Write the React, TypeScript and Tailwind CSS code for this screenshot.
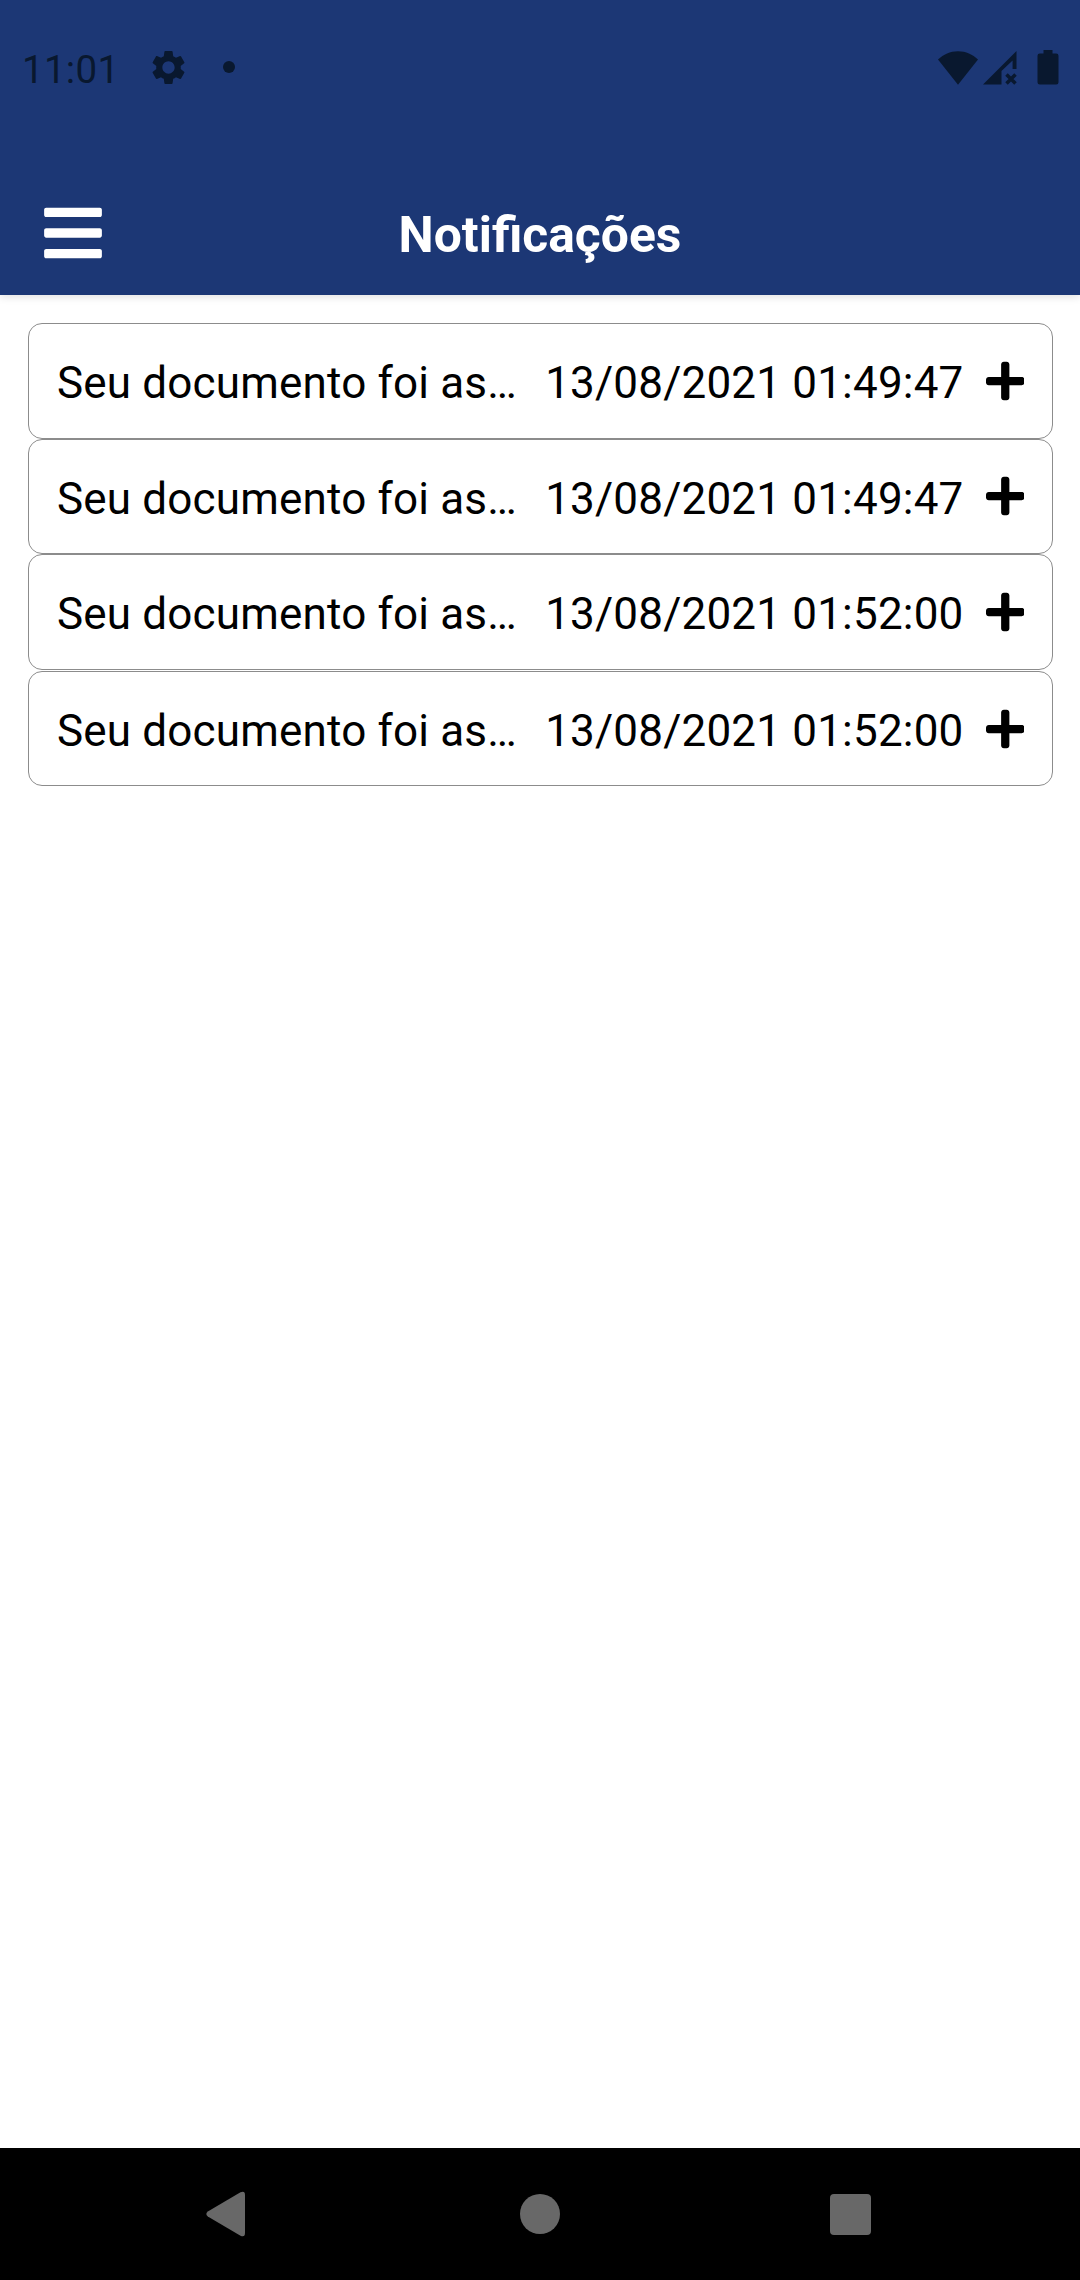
import { FaBars, FaPlus } from "react-icons/fa";
import { MdSettings } from "react-icons/md";

const notifications = [
  { id: 1, title: "Seu documento foi as…", date: "13/08/2021 01:49:47" },
  { id: 2, title: "Seu documento foi as…", date: "13/08/2021 01:49:47" },
  { id: 3, title: "Seu documento foi as…", date: "13/08/2021 01:52:00" },
  { id: 4, title: "Seu documento foi as…", date: "13/08/2021 01:52:00" },
];

function StatusBar() {
  return (
    <div className="flex h-[134px] items-center justify-between pl-[22px] pr-[21px] text-[#09182f]">
      <div className="flex items-center">
        <span className="w-[126px] pt-[6px] text-[38.5px] leading-none tracking-[0.3px]">11:01</span>
        <MdSettings className="size-[41px]" />
        <span className="ml-[34px] size-3 rounded-full bg-[#09182f]" />
      </div>
      <div className="flex items-center">
        <svg className="h-[35px] w-[40px]" viewBox="0 0 40 35" fill="currentColor">
          <path d="M0 9.5C5.5 4.5 12 1.3 20 1.3S34.500 4.500 40 9.500L20 34.800Z" />
        </svg>
        <svg className="ml-[5px] h-[35px] w-[34px]" viewBox="0 0 34 35" fill="currentColor">
          <path d="M0 34.500 33.500 1v18h-3.900V10.500L18.500 21v13.500Z" />
          <path
            d="m23.500 24.500 9 9m0-9-9 9"
            stroke="currentColor"
            strokeWidth="3.500"
          />
        </svg>
        <svg className="ml-[20px] h-[35px] w-[22px]" viewBox="0 0 22 35" fill="currentColor">
          <path d="M6.500 0h9v3.500h3.700a2.300 2.300 0 0 1 2.300 2.300v26.400a2.300 2.300 0 0 1-2.300 2.300H2.800a2.300 2.300 0 0 1-2.300-2.300V5.800a2.300 2.300 0 0 1 2.300-2.300h3.700Z" />
        </svg>
      </div>
    </div>
  );
}

function Header() {
  return (
    <header className="h-[295px] shrink-0 bg-[#1c3775] shadow-[0_2px_8px_rgba(0,0,0,0.12)]">
      <StatusBar />
      <div className="grid grid-cols-[1fr_auto_1fr] items-center px-11 pt-[66px]">
        <button type="button" aria-label="Menu">
          <FaBars className="h-[66px] w-[58px] text-white" />
        </button>
        <h1 className="pt-[6px] text-[49.8px] font-bold leading-none text-white">
          Notificações
        </h1>
      </div>
    </header>
  );
}

function NotificationItem({ title, date }: { title: string; date: string }) {
  return (
    <li className="flex h-[115.6px] items-center rounded-[14px] border border-[#8c8c8c] px-[28px] text-[44px] leading-none text-black last:mt-px">
      <span className="whitespace-nowrap pt-[5px] tracking-[0.18px]">{title}</span>
      <span className="ml-auto whitespace-nowrap pt-[5px] tracking-[0.19px]">{date}</span>
      <FaPlus className="ml-[22px] h-11 w-[38.5px] shrink-0" />
    </li>
  );
}

function NavigationBar() {
  return (
    <nav className="flex h-[132px] shrink-0 items-center bg-black pl-[206px] text-[#686868]">
      <svg className="h-[46px] w-[39px]" viewBox="0 0 39 46" fill="currentColor">
        <path d="M1.800 20.500 34.500 1.300Q39 -0.500 39 4v38q0 4.500-4.500 2.700L1.800 25.500q-3-2.500 0-5Z" />
      </svg>
      <span className="ml-[275px] size-10 rounded-full bg-[#686868]" />
      <span className="ml-[270px] size-[41px] rounded-[4px] bg-[#686868]" />
    </nav>
  );
}

export default function App() {
  return (
    <div className="flex h-[2280px] w-[1080px] flex-col bg-white font-[Roboto,sans-serif]">
      <Header />
      <main className="flex-1 pl-7 pr-[27px] pt-7">
        <ul>
          {notifications.map((item) => (
            <NotificationItem key={item.id} title={item.title} date={item.date} />
          ))}
        </ul>
      </main>
      <NavigationBar />
    </div>
  );
}
